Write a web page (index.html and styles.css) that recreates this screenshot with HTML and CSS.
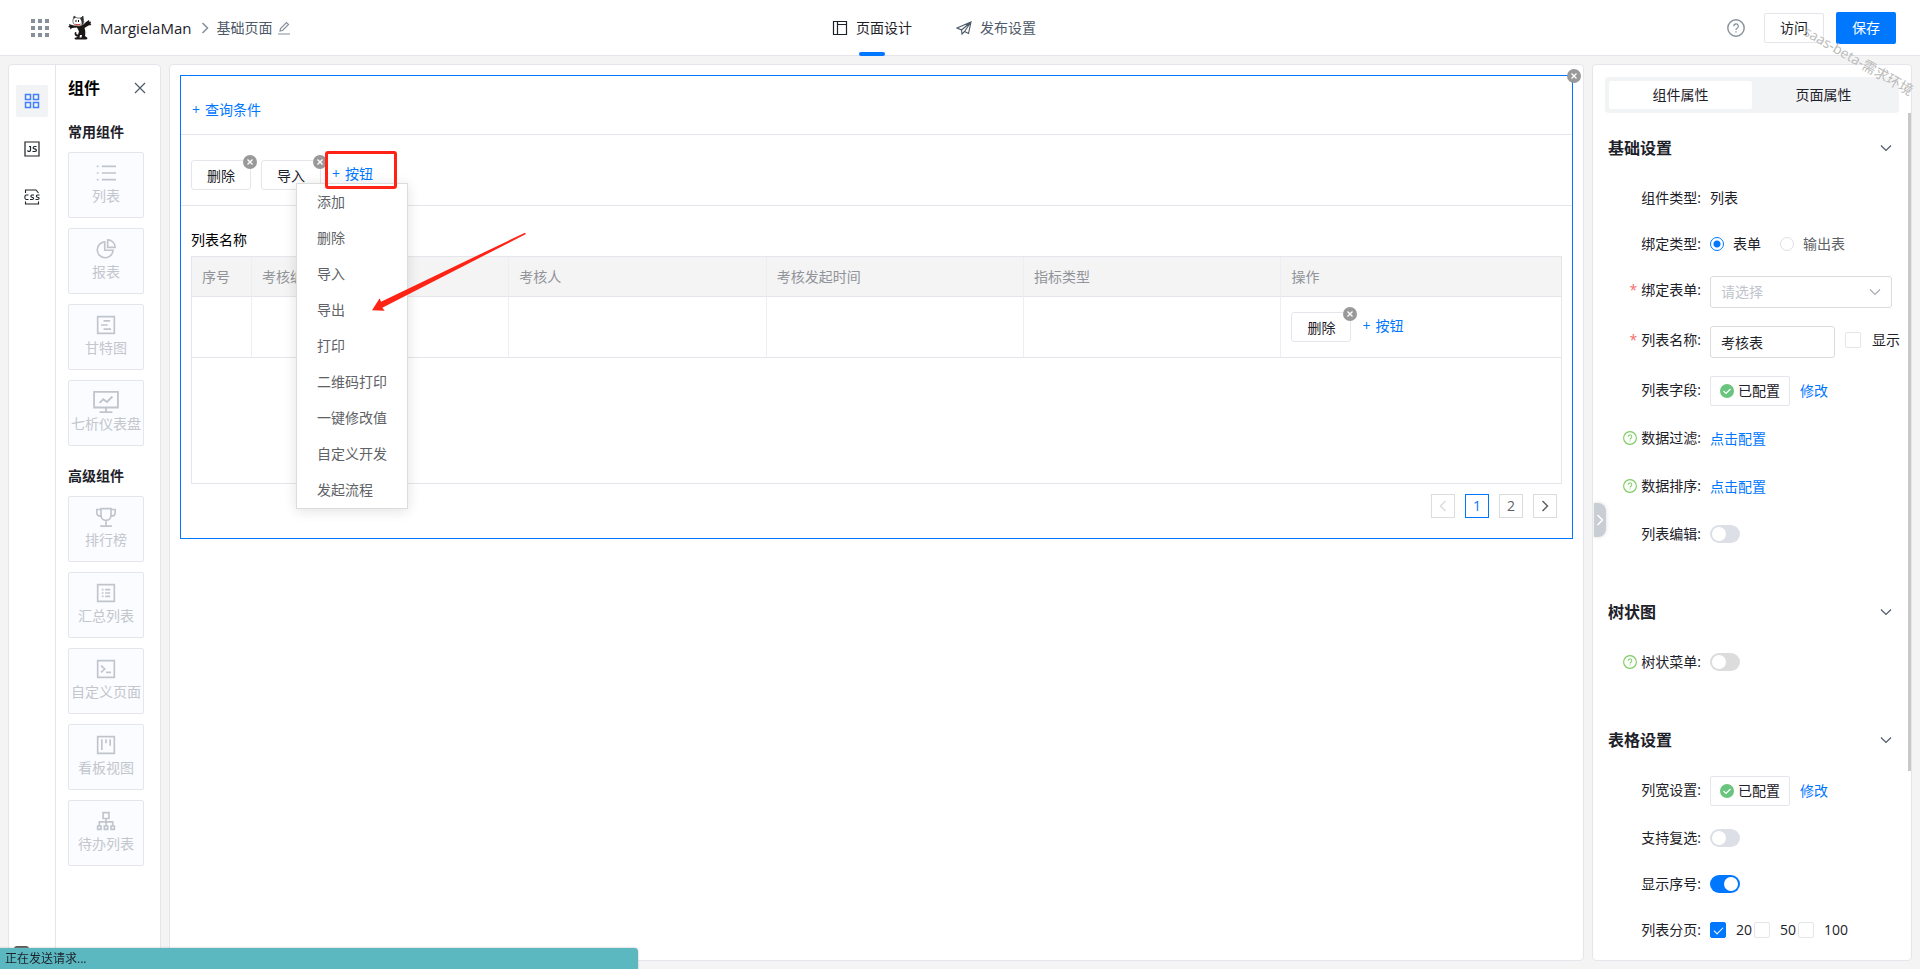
FILE: index.html
```html
<!DOCTYPE html>
<html lang="zh-CN">
<head>
<meta charset="utf-8">
<title>基础页面 - MargielaMan</title>
<link rel="stylesheet" href="styles.css">
</head>
<body>
<svg class="defs" aria-hidden="true">
  <symbol id="close" viewBox="0 0 14 14"><circle cx="7" cy="7" r="7" fill="#999"/><path d="M4.500 4.500l5 5M9.500 4.500l-5 5" stroke="#fff" stroke-width="1.300"/></symbol>
  <symbol id="help" viewBox="0 0 18 18"><circle cx="9" cy="9" r="8.200" fill="none" stroke="currentColor" stroke-width="1.400"/><path d="M6.700 7.300a2.300 2.300 0 1 1 3.400 2c-.8.450-1.100.8-1.100 1.700M9 12.200v1.400" fill="none" stroke="currentColor" stroke-width="1.300"/></symbol>
  <symbol id="down" viewBox="0 0 12 12"><path d="M1 3.500l5 5 5-5" fill="none" stroke="currentColor" stroke-width="1.200"/></symbol>
  <symbol id="right" viewBox="0 0 12 12"><path d="M3.500 1l5 5-5 5" fill="none" stroke="currentColor" stroke-width="1.500"/></symbol>
  <symbol id="done" viewBox="0 0 14 14"><circle cx="7" cy="7" r="7" fill="#6ac47e"/><path d="M3.500 7l2.500 2.500 4.500-4.500" fill="none" stroke="#fff" stroke-width="1.200"/></symbol>
</svg>

<header class="topbar">
  <div class="brand">
    <button class="icon-btn" aria-label="应用"><svg width="18" height="18" viewBox="0 0 18 18" fill="#86909c"><path d="M0 0h4v4H0zM7 0h4v4H7zM14 0h4v4h-4zM0 7h4v4H0zM7 7h4v4H7zM14 7h4v4h-4zM0 14h4v4H0zM7 14h4v4H7zM14 14h4v4h-4z"/></svg></button>
    <svg class="logo" width="24" height="26" viewBox="0 0 24 26"><path d="M10 11c3 0 5-1 8-4l3-2 .5 2 1.500-.5-.5 2.500 1 1-3 .5-4 2.500c1 3 1 5 .5 8l2 1.500c1 1 0 2-1 2H8c-2 0-2-2 0-2l2-1c-3 0-4-2-3-4.500l1.500.5c-.5 1.500 0 2 1.500 2l1-3-2-4-5 .5-1.500 1.500-.5-2L0 12l1.500-1.500L1 9l3 1 4 1z" fill="#1b1717"/><path d="M5 5l1-4 3 2h4l2-2 .5 4.500c1 3-1.500 5.500-5 5.500S4.500 9 5 5z" fill="#fff" stroke="#555" stroke-width=".8"/><path d="M5.500 4L6 1l2 1.500zM13 2.500l2-1.500.5 4.500c.5 2-.5 4-2 5 .5-3 0-5-1.500-7z" fill="#333"/><path d="M8 5v2M10.500 5v2" stroke="#111"/><path d="M6.500 8.500c2 1 5 1 6.500 0-.5 2.500-5.500 2.500-6.500 0z" fill="#c33"/><path d="M12 20h2l-.5 2.500h-2z" fill="#fff"/></svg>
    <span class="app-name">MargielaMan</span>
    <svg class="crumb" width="12" height="12"><use href="#right"/></svg>
    <span class="page-name">基础页面</span>
    <button class="icon-btn" aria-label="编辑"><svg width="14" height="14" viewBox="0 0 14 14" fill="none" stroke="#86909c" stroke-width="1.200"><path d="M1 13h12M3 10l.5-2.500L9.500 1.500l2 2-6 6z"/></svg></button>
  </div>
  <nav class="tabs">
    <a class="tab tab-on" href="#design"><svg width="16" height="16" viewBox="0 0 16 16" fill="none" stroke="currentColor" stroke-width="1.200"><path d="M1.500 1.500h13v13h-13zM5.500 1.500v13M5.500 4.500h9"/></svg>页面设计</a>
    <a class="tab" href="#publish"><svg width="16" height="16" viewBox="0 0 16 16" fill="none" stroke="currentColor" stroke-width="1.100"><path d="M1 8L15 2l-2.500 11.500-4-2L6 14l-.5-4zM5.500 10L15 2 8.500 11.500"/></svg>发布设置</a>
  </nav>
  <div class="actions">
    <button class="icon-btn help" aria-label="帮助"><svg width="18" height="18"><use href="#help"/></svg></button>
    <button class="btn visit">访问</button>
    <button class="save">保存</button>
  </div>
  <span class="watermark">saas-beta-需求环境</span>
</header>

<main class="workspace">
  <aside class="left">
    <nav class="rail">
      <button class="rail-btn rail-on" aria-label="组件"><svg width="16" height="16" viewBox="0 0 16 16" fill="none" stroke="#4080ff" stroke-width="1.500"><path d="M1.500 1.500h5v5h-5zM9.500 1.500h5v5h-5zM1.500 9.500h5v5h-5zM9.500 9.500h5v5h-5z"/></svg></button>
      <button class="rail-btn" aria-label="JS"><svg width="16" height="16" viewBox="0 0 16 16" fill="none" stroke="#1d2129" stroke-width="1.200"><path d="M1 1h14v14H1zM3.500 9.500c.5 1.500 3 1.200 3-.5V5.500H5M12.500 5.500h-2c-1.800 0-1.800 2.300 0 2.300 2.500 0 2.500 2.700 0 2.700h-2"/></svg></button>
      <button class="rail-btn" aria-label="CSS"><svg width="16" height="16" viewBox="0 0 16 16" fill="none" stroke="#1d2129" stroke-width="1.100"><path d="M1.500 4V1H12l2.500 3M1.500 12.500v2.500h13v-2.500M4.500 6H2C.500 6 .500 10.500 2 10.500h2.500M10 6H8C6.500 6 6.500 8.200 8 8.200c2.200 0 2.200 2.300 0 2.300H6M15.500 6h-2c-1.500 0-1.500 2.200 0 2.200 2.200 0 2.200 2.300 0 2.300h-2"/></svg></button>
      <span class="rail-foot"></span>
    </nav>
    <section class="parts">
      <div class="parts-head"><h2>组件</h2><button class="icon-btn" aria-label="关闭"><svg width="12" height="12" viewBox="0 0 12 12" stroke="#4e5969" stroke-width="1.200"><path d="M1 1l10 10M11 1L1 11"/></svg></button></div>
      <h3>常用组件</h3>
      <div class="cards">
        <button class="card"><svg viewBox="0 0 24 24"><path d="M7 4h17M7 12h17M7 20h17M1 4h2M1 12h2M1 20h2"/></svg>列表</button>
        <button class="card"><svg viewBox="0 0 24 24"><path d="M10.500 3.500a9.500 9.500 0 1 0 10 10h-10zM14 1v9h9A9 9 0 0 0 14 1z"/></svg>报表</button>
        <button class="card"><svg viewBox="0 0 24 24"><path d="M2 2h20v20H2zM9 7h8M6 12h8M9 17h9"/></svg>甘特图</button>
        <button class="card"><svg class="wide" viewBox="0 0 28 24"><path d="M1 1h26v17H1zM14 18v4M7 23h14M7 13l4-4 4 3 6-6"/></svg>七析仪表盘</button>
      </div>
      <h3 class="more">高级组件</h3>
      <div class="cards">
        <button class="card"><svg viewBox="0 0 24 24"><path d="M6 2h12v8c0 8-12 8-12 0zM6 3H1v4c0 3 2 4 5 4M18 3h5v4c0 3-2 4-5 4M12 16v6M5 23h14"/></svg>排行榜</button>
        <button class="card"><svg viewBox="0 0 24 24"><path d="M2 2h20v20H2zM7 8h2M7 12h2M7 16h2M11 8h6M11 12h6M11 16h6"/></svg>汇总列表</button>
        <button class="card"><svg viewBox="0 0 24 24"><path d="M2 2h20v20H2zM6 8l4.500 4L6 16M12 16h6"/></svg>自定义页面</button>
        <button class="card"><svg viewBox="0 0 24 24"><path d="M2 2h20v20H2zM7 5v13M12 5v5M17 5v8"/></svg>看板视图</button>
        <button class="card"><svg viewBox="0 0 24 24"><path d="M8.500 2h7v7h-7zM12 9v9M4 18v-5h16v5M2 18h4v4H2zM10 18h4v4h-4zM18 18h4v4h-4z"/></svg>待办列表</button>
      </div>
    </section>
  </aside>

  <section class="canvas">
    <div class="block">
      <button class="dot block-dot" aria-label="移除"><svg width="14" height="14"><use href="#close"/></svg></button>
      <div class="query"><button class="add"><span>+</span>查询条件</button></div>
      <div class="toolbar">
        <div class="tool"><button class="btn">删除</button><button class="dot" aria-label="移除"><svg width="14" height="14"><use href="#close"/></svg></button></div>
        <div class="tool"><button class="btn">导入</button><button class="dot" aria-label="移除"><svg width="14" height="14"><use href="#close"/></svg></button></div>
        <div class="dropdown">
          <button class="add"><span>+</span>按钮</button>
          <ul class="menu">
            <li>添加</li><li>删除</li><li>导入</li><li>导出</li><li>打印</li><li>二维码打印</li><li>一键修改值</li><li>自定义开发</li><li>发起流程</li>
          </ul>
          <span class="mark"></span>
        </div>
      </div>
      <div class="list">
        <div class="list-name">列表名称</div>
        <div class="table-box">
          <table>
            <colgroup><col class="c-no"><col class="c-field"><col class="c-field"><col class="c-field"><col class="c-field"><col></colgroup>
            <thead><tr><th>序号</th><th>考核编号</th><th>考核人</th><th>考核发起时间</th><th>指标类型</th><th>操作</th></tr></thead>
            <tbody><tr><td></td><td></td><td></td><td></td><td></td><td><div class="ops"><div class="tool"><button class="btn">删除</button><button class="dot" aria-label="移除"><svg width="14" height="14"><use href="#close"/></svg></button></div><button class="add"><span>+</span>按钮</button></div></td></tr></tbody>
          </table>
        </div>
        <nav class="pager">
          <button class="pg pg-off" aria-label="上一页"><svg class="flip" width="12" height="12"><use href="#right"/></svg></button>
          <button class="pg pg-on">1</button>
          <button class="pg">2</button>
          <button class="pg" aria-label="下一页"><svg width="12" height="12"><use href="#right"/></svg></button>
        </nav>
      </div>
      <svg class="arrow" width="156" height="80" viewBox="0 0 156 80"><path d="M1 78.300L8.700 66.300 10 69.700 154 .700l1 1.300L11.300 75.700l2.400 3z" fill="#fe2314"/></svg>
    </div>
  </section>

  <aside class="props">
    <button class="handle" aria-label="收起"><svg width="12" height="12"><use href="#right"/></svg></button>
    <span class="scroll"></span>
    <div class="seg"><button class="seg-btn seg-on">组件属性</button><button class="seg-btn">页面属性</button></div>

    <section class="group">
      <h2>基础设置<svg width="12" height="12"><use href="#down"/></svg></h2>
      <div class="row"><span class="label">组件类型:</span><span class="value">列表</span></div>
      <div class="row"><span class="label">绑定类型:</span>
        <div class="value radios"><label><input type="radio" name="bind" checked>表单</label><label class="dim"><input type="radio" name="bind">输出表</label></div></div>
      <div class="row"><label class="label" for="form"><i>*</i>绑定表单:</label>
        <div class="select"><select id="form"><option>请选择</option></select><svg width="12" height="12"><use href="#down"/></svg></div></div>
      <div class="row"><label class="label" for="name"><i>*</i>列表名称:</label>
        <input class="text" id="name" type="text" value="考核表"><label class="show"><input type="checkbox">显示</label></div>
      <div class="row"><span class="label">列表字段:</span><button class="btn status"><svg width="14" height="14"><use href="#done"/></svg>已配置</button><a class="edit" href="#fields">修改</a></div>
      <div class="row tall"><span class="label"><svg width="14" height="14"><use href="#help"/></svg>数据过滤:</span><a href="#filter">点击配置</a></div>
      <div class="row tall"><span class="label"><svg width="14" height="14"><use href="#help"/></svg>数据排序:</span><a href="#sort">点击配置</a></div>
      <div class="row"><label class="label" for="s1">列表编辑:</label><input class="switch" id="s1" type="checkbox"></div>
    </section>

    <section class="group">
      <h2>树状图<svg width="12" height="12"><use href="#down"/></svg></h2>
      <div class="row"><label class="label" for="s2"><svg width="14" height="14"><use href="#help"/></svg>树状菜单:</label><input class="switch grey" id="s2" type="checkbox"></div>
    </section>

    <section class="group">
      <h2>表格设置<svg width="12" height="12"><use href="#down"/></svg></h2>
      <div class="row"><span class="label">列宽设置:</span><button class="btn status"><svg width="14" height="14"><use href="#done"/></svg>已配置</button><a class="edit" href="#widths">修改</a></div>
      <div class="row"><label class="label" for="s3">支持复选:</label><input class="switch" id="s3" type="checkbox"></div>
      <div class="row"><label class="label" for="s4">显示序号:</label><input class="switch" id="s4" type="checkbox" checked></div>
      <div class="row"><span class="label">列表分页:</span><div class="value sizes"><label><input type="checkbox" checked>20</label><label><input type="checkbox">50</label><label><input type="checkbox">100</label></div></div>
    </section>
  </aside>
</main>
<div class="toast">正在发送请求...</div>
</body>
</html>
```
FILE: styles.css
```css
* { box-sizing: border-box; }
body {
  margin: 0;
  height: 100vh;
  display: flex;
  flex-direction: column;
  overflow: hidden;
  background: #f4f4f4;
  color: #1d2129;
  font: 14px/22px "Open Sans", "Noto Sans CJK SC", sans-serif;
}
button, input, select { font: inherit; color: inherit; margin: 0; }
button { padding: 0; border: 0; background: none; cursor: pointer; }
h2, h3, ul { margin: 0; padding: 0; list-style: none; }
a { color: #0077ff; text-decoration: none; }
svg { display: block; flex: none; }
.defs { position: absolute; width: 0; height: 0; }

/* top bar */
.topbar {
  position: relative;
  flex: none;
  height: 56px;
  display: grid;
  grid-template-columns: 1fr auto 1fr;
  background: #fff;
  border-bottom: 1px solid #e5e6eb;
}
.brand { display: flex; align-items: center; padding-left: 31px; }
.logo { margin-left: 19px; }
.app-name { margin-left: 8px; font-size: 15px; }
.crumb { margin: 0 5px 0 8px; color: #86909c; }
.page-name { color: #4e5969; margin-right: 5px; }
.tabs { display: flex; gap: 44px; padding-right: 52px; }
.tab { position: relative; display: flex; align-items: center; gap: 8px; color: #4e5969; }
.tab-on { color: #1d2129; }
.tab-on::after {
  content: "";
  position: absolute;
  left: 50%;
  bottom: -1px;
  width: 26px;
  height: 4px;
  margin-left: -13px;
  border-radius: 2px;
  background: #0077ff;
}
.actions { display: flex; align-items: center; justify-content: flex-end; padding-right: 24px; z-index: 2; }
.help { color: #86909c; margin-right: 19px; }
.btn {
  min-width: 60px;
  height: 30px;
  border: 1px solid #e5e6eb;
  border-radius: 2px;
  background: #fff;
}
.visit { margin-right: 12px; background: none; }
.save { width: 60px; height: 32px; border-radius: 2px; background: #0077ff; color: #fff; }
.watermark {
  position: absolute;
  z-index: 3;
  right: 0;
  top: 50px;
  color: #bbb;
  font-size: 14px;
  white-space: nowrap;
  transform: rotate(30deg);
  pointer-events: none;
}

.workspace { flex: 1; min-height: 0; display: flex; gap: 8px; padding: 8px; }

/* left */
.left { flex: none; width: 153px; display: flex; background: #fff; border: 1px solid #e5e6eb; border-radius: 4px; }
.rail { width: 47px; display: flex; flex-direction: column; align-items: center; gap: 16px; padding-top: 20px; border-right: 1px solid #e5e6eb; }
.rail-btn { width: 32px; height: 32px; display: flex; align-items: center; justify-content: center; border-radius: 2px; }
.rail-on { background: #f2f3f5; }
.rail-foot { width: 15px; height: 14px; margin: auto 22px 0 0; border: 2px solid #555; border-radius: 3px; }
.parts { flex: 1; padding: 12px 14px 0 12px; }
.parts-head { display: flex; align-items: center; justify-content: space-between; }
.parts h2 { font-size: 16px; line-height: 22px; color: #000; }
.parts h3 { font-size: 14px; line-height: 22px; margin: 22px 0 9px; }
.parts h3.more { margin-top: 19px; }
.cards { display: grid; gap: 10px; }
.card {
  width: 76px;
  height: 66px;
  display: flex;
  flex-direction: column;
  align-items: center;
  gap: 2px;
  padding-top: 10px;
  border: 1px solid #e5e6eb;
  border-radius: 2px;
  background: #fbfcff;
  color: #c2c6cd;
  white-space: nowrap;
}
.card svg { width: 20px; height: 20px; fill: none; stroke: #c0c5cd; stroke-width: 2; }
.card svg.wide { width: 26px; height: 22px; margin-bottom: -2px; }

/* canvas */
.canvas { flex: 1; min-width: 0; padding: 10px; background: #fff; border: 1px solid #e5e6eb; border-radius: 4px; }
.block { position: relative; border: 1px solid #0077ff; }
.query { padding: 20px 10px 10px; border-bottom: 1px solid #e5e6eb; }
.add { display: flex; gap: 5px; padding-left: 1px; color: #0077ff; line-height: 28px; }
.toolbar { display: flex; gap: 10px; padding: 25px 10px 15px; border-bottom: 1px solid #e5e6eb; }
.tool { position: relative; }
.tool .btn { display: block; padding-top: 2px; border-radius: 3px; }
.dot { position: absolute; top: -5px; right: -6px; }
.block-dot { top: -7px; right: -9px; }
.dropdown { position: relative; }
.menu {
  position: absolute;
  z-index: 2;
  left: -35px;
  top: 23px;
  width: 112px;
  background: #fff;
  border: 1px solid #dcdcdc;
  box-shadow: 0 2px 12px rgba(0, 0, 0, .12);
  color: #606266;
}
.menu li { height: 36px; line-height: 35px; padding-left: 20px; }
.mark { position: absolute; z-index: 3; left: -6px; top: -9px; width: 72px; height: 38px; border: 3px solid #fe2314; border-radius: 3px; pointer-events: none; }
.arrow { position: absolute; z-index: 4; left: 190px; top: 156px; }
.list { padding: 23px 10px 20px; }
.list-name { color: #000; margin-bottom: 5px; }
.table-box { min-height: 228px; border: 1px solid #e5e6eb; }
table { width: 100%; table-layout: fixed; border-collapse: separate; border-spacing: 0; }
.c-no { width: 60px; }
.c-field { width: 18.8%; }
th, td { padding: 0 10px; border-right: 1px solid #ebeef5; border-bottom: 1px solid #e5e6eb; text-align: left; }
th:last-child, td:last-child { border-right: 0; }
th { height: 40px; background: #f4f4f4; color: #909399; font-weight: 400; }
td { height: 61px; }
.ops { display: flex; gap: 10px; }
.pager { display: flex; justify-content: flex-end; gap: 10px; margin: 10px 5px 0 0; }
.pg { width: 24px; height: 24px; display: flex; align-items: center; justify-content: center; border: 1px solid #dcdcdc; color: #606266; }
.pg-on { border-color: #0077ff; color: #0077ff; }
.pg-off { color: #dcdcdc; }
.flip { transform: rotate(180deg); }

/* properties */
.props { position: relative; flex: none; width: 320px; padding: 12px 12px 0; overflow: hidden; background: #fff; border: 1px solid #e5e6eb; border-radius: 4px; }
.handle { position: absolute; left: 1px; top: 438px; width: 12px; height: 34px; background: #c9cdd4; border-radius: 0 8px 8px 0; color: #fff; box-shadow: 0 0 4px #ddd; }
.scroll { position: absolute; right: 0; top: 48px; width: 3px; height: 658px; background: #c8c8c8; }
.seg { display: flex; padding: 4px; background: #f2f3f5; border-radius: 4px; }
.seg-btn { flex: 1; height: 28px; border-radius: 2px; }
.seg-on { background: #fff; }
.group { display: flex; flex-direction: column; gap: 18px; padding: 0 7px 0 3px; margin-top: 52px; }
.seg + .group { margin-top: 23px; }
.group h2 { display: flex; align-items: center; justify-content: space-between; margin-bottom: 6px; font-size: 16px; line-height: 24px; font-weight: 600; }
.group h2 svg { color: #4e5969; }
.row { display: flex; align-items: center; min-height: 28px; }
.tall { min-height: 30px; }
.label { align-self: flex-start; display: flex; align-items: center; justify-content: flex-end; gap: 4px; width: 93px; margin-right: 9px; line-height: 28px; white-space: nowrap; }
.label i { font-style: normal; color: #f56c6c; }
.label svg { color: #7ccb62; }
.radios { display: flex; gap: 19px; }
.radios label { display: flex; align-items: center; gap: 9px; }
.dim { color: #606266; }
input[type="radio"] { appearance: none; width: 14px; height: 14px; border: 1px solid #dcdfe6; border-radius: 50%; }
input[type="radio"]:checked { border-color: #0077ff; background: radial-gradient(circle, #0077ff 3px, #fff 4px); }
.select { position: relative; flex: 1; }
.select select { appearance: none; display: block; width: 100%; height: 32px; padding: 0 10px; border: 1px solid #dcdcdc; border-radius: 3px; background: #fff; color: #bfc4cd; }
.select svg { position: absolute; right: 11px; top: 10px; color: #a8abb2; }
.text { flex: 1; min-width: 0; height: 32px; padding: 0 10px; border: 1px solid #dcdcdc; border-radius: 3px; }
.show { align-self: flex-start; display: flex; align-items: center; gap: 11px; height: 28px; margin: 0 -8px 0 10px; }
.show input, .sizes input { appearance: none; display: grid; place-items: center; width: 16px; height: 16px; border: 1px solid #e5e6eb; border-radius: 2px; background: #fff; }
.sizes input:checked { border-color: #0077ff; background: #0077ff; }
.sizes input:checked::before { content: ""; width: 8px; height: 4px; margin-top: -2px; border: solid #fff; border-width: 0 0 1px 1px; transform: rotate(-45deg); }
.sizes { display: flex; gap: 2px; }
.sizes label { display: flex; align-items: center; gap: 10px; }
.status { display: flex; align-items: center; gap: 4px; padding: 0 9px; }
.edit { margin-left: 10px; }
.switch { appearance: none; display: flex; width: 30px; height: 18px; padding: 2px; border-radius: 9px; background: #dcdfe6; }
.switch::before { content: ""; width: 14px; height: 14px; border-radius: 50%; background: #fff; }
.switch:checked { justify-content: flex-end; background: #0077ff; }
.grey { background: #dcdcdc; }

.toast { position: fixed; z-index: 9; left: 0; bottom: 0; width: 638px; height: 21px; padding-left: 5px; border-radius: 0 4px 0 0; background: #5cb8c0; font-size: 12px; line-height: 21px; box-shadow: 0 0 2px #aaa; }
```
